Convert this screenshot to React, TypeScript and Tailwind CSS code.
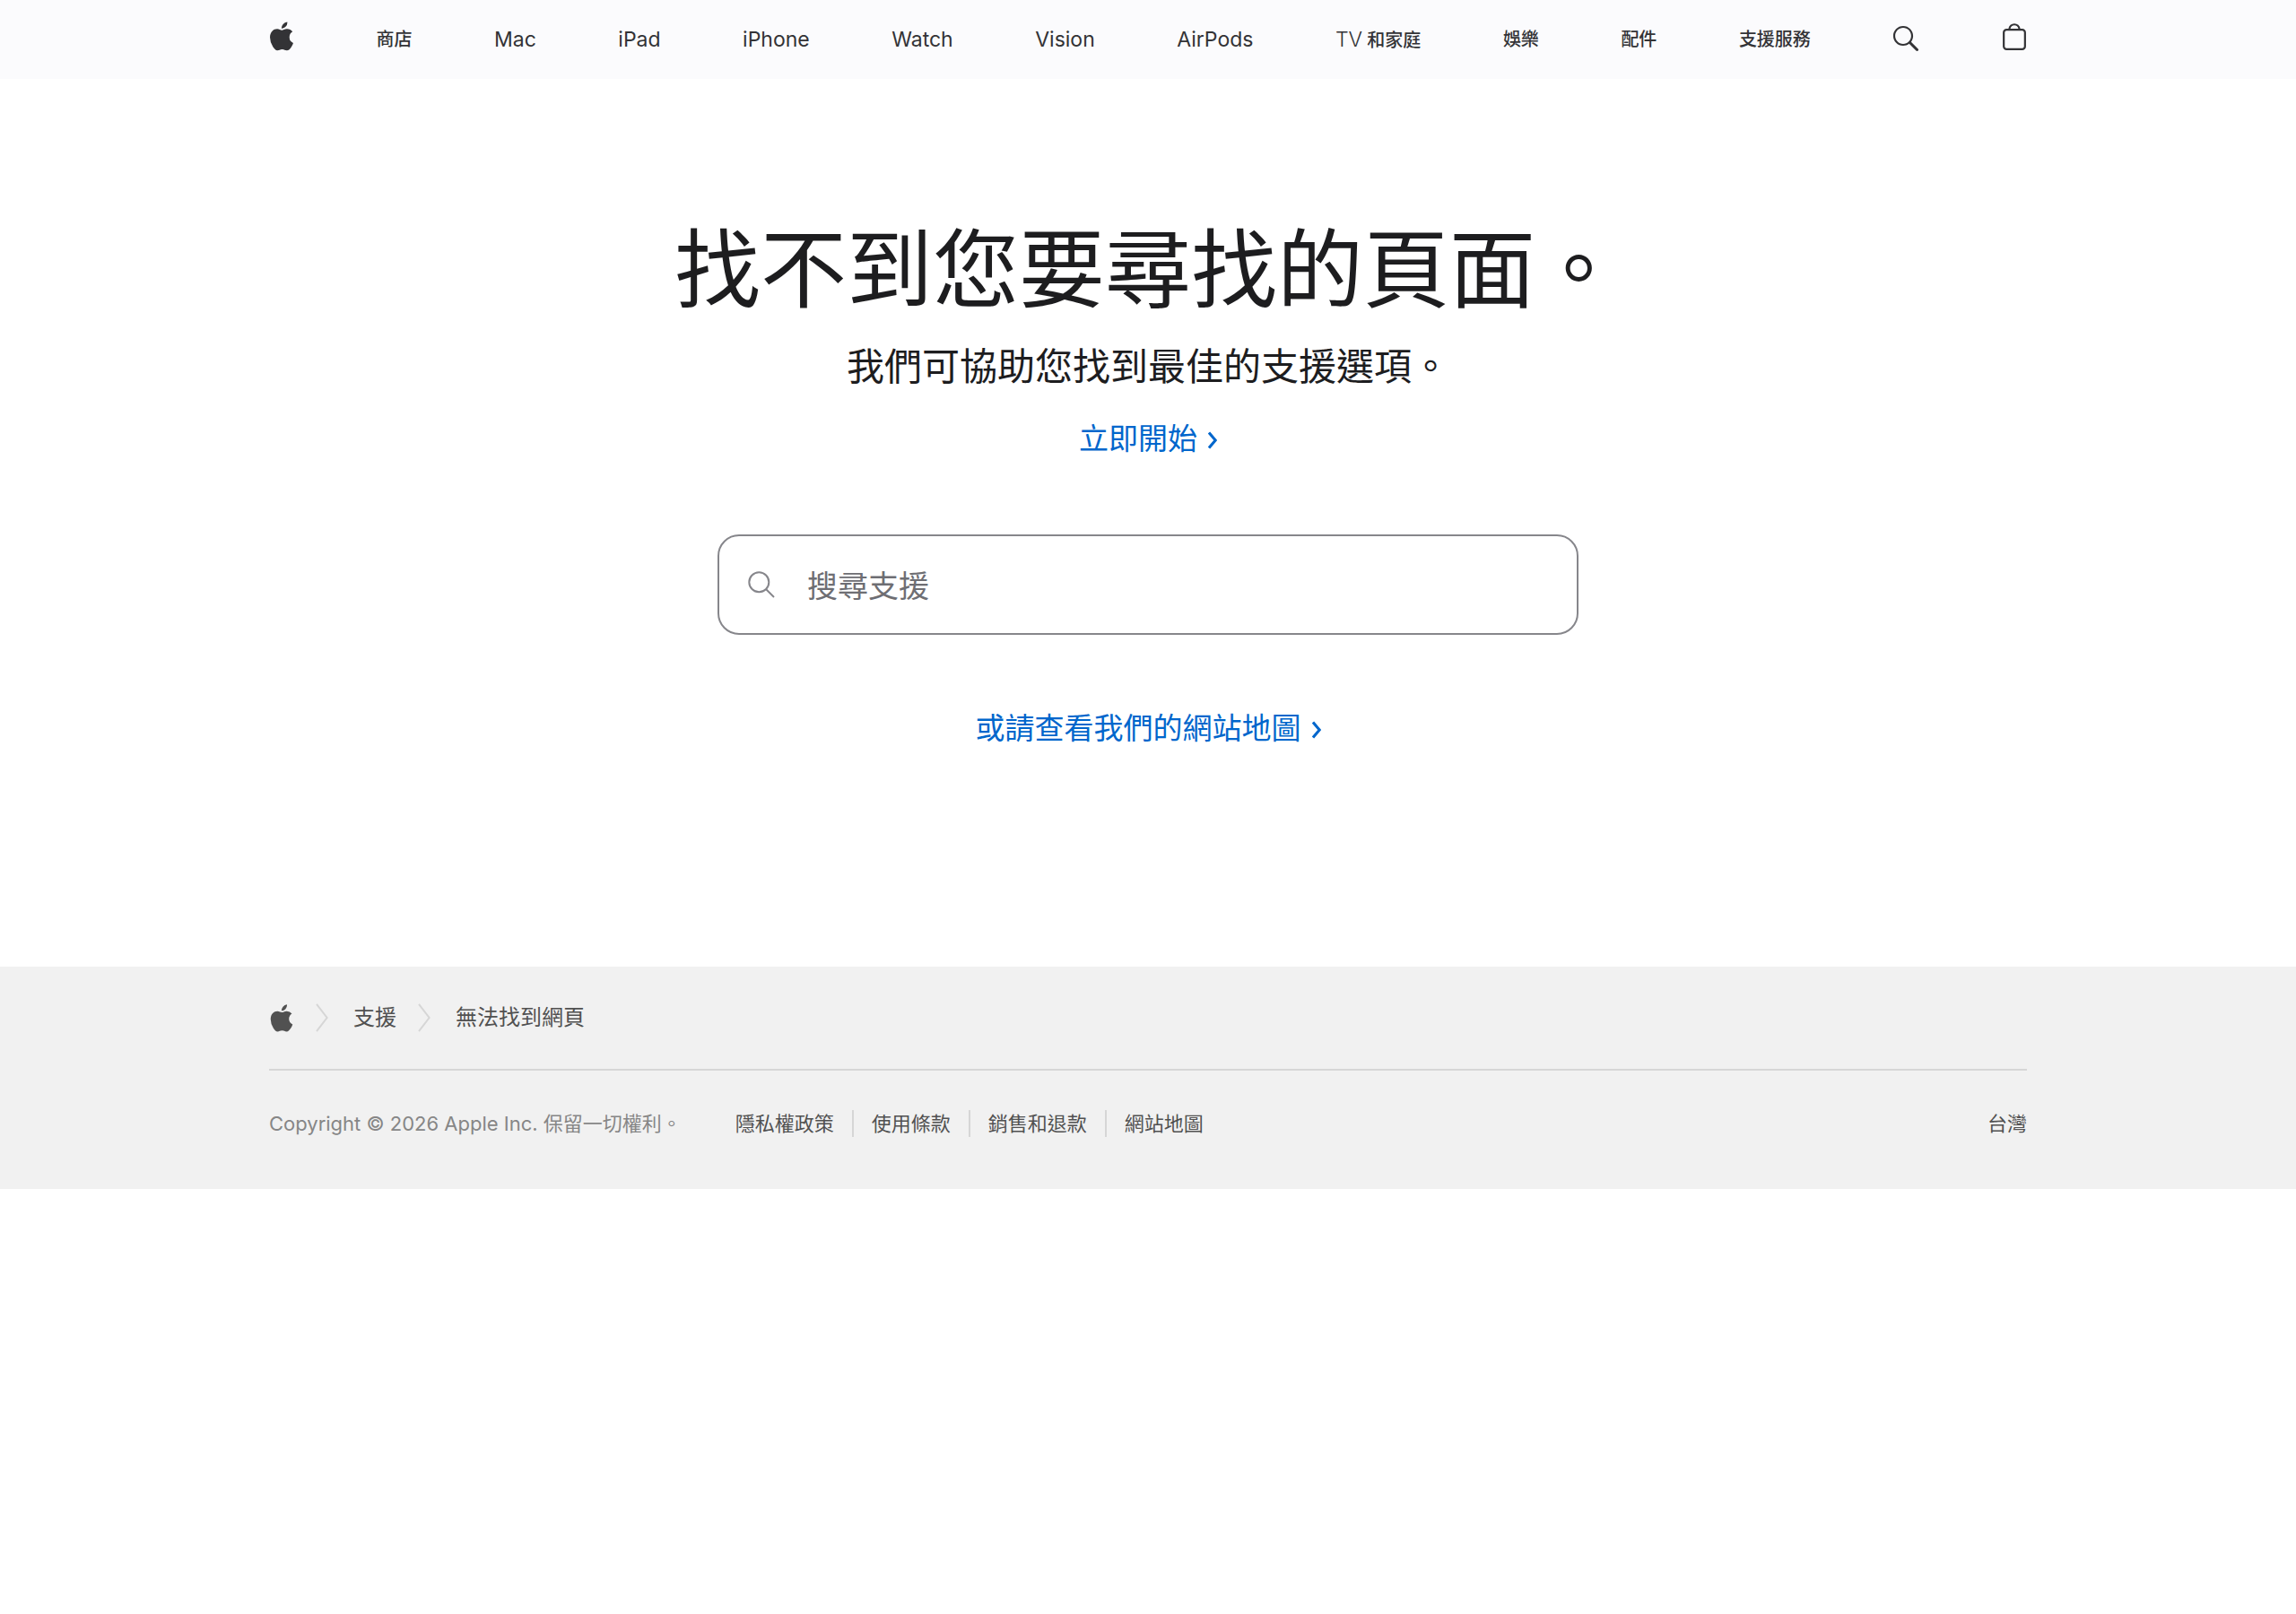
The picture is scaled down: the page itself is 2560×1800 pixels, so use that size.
import React from 'react';

const NAV_ITEMS = [
  '商店',
  'Mac',
  'iPad',
  'iPhone',
  'Watch',
  'Vision',
  'AirPods',
  'TV 和家庭',
  '娛樂',
  '配件',
  '支援服務',
];

const LEGAL_LINKS = ['隱私權政策', '使用條款', '銷售和退款', '網站地圖'];

const AppleLogo: React.FC<{ className?: string }> = ({ className }) => (
  <svg viewBox="0 11 14 18" className={className} fill="currentColor" aria-hidden="true">
    <path d="m13.0729 17.6825a3.61 3.61 0 0 0 -1.7248 3.0365 3.5132 3.5132 0 0 0 2.1379 3.2223 8.394 8.394 0 0 1 -1.0948 2.2618c-.6816.9812-1.3943 1.9623-2.4787 1.9623s-1.3633-.63-2.613-.63c-1.2187 0-1.6525.6507-2.644.6507s-1.6834-.9089-2.4787-2.0243a9.7842 9.7842 0 0 1 -1.6628-5.2776c0-3.0984 2.014-4.7405 3.9969-4.7405 1.0535 0 1.9314.6919 2.5924.6919.63 0 1.6112-.7333 2.8092-.7333a3.7579 3.7579 0 0 1 3.1604 1.5802zm-3.7284-2.8918a3.5615 3.5615 0 0 0 .8469-2.22 1.5353 1.5353 0 0 0 -.031-.32 3.5686 3.5686 0 0 0 -2.3445 1.2084 3.4629 3.4629 0 0 0 -.8779 2.1585 1.419 1.419 0 0 0 .031.2892 1.19 1.19 0 0 0 .2169.0207 3.0935 3.0935 0 0 0 2.1586-1.1368z" />
  </svg>
);

const SearchIcon: React.FC = () => (
  <svg viewBox="0 0 15 44" className="h-[88px] w-[30px]" fill="currentColor" aria-hidden="true">
    <path d="M14.298,27.202l-3.87-3.87c0.701-0.929,1.122-2.081,1.122-3.332c0-3.06-2.489-5.55-5.55-5.55c-3.06,0-5.55,2.49-5.55,5.55c0,3.061,2.49,5.55,5.55,5.55c1.251,0,2.403-0.421,3.332-1.122l3.87,3.87c0.151,0.151,0.35,0.228,0.548,0.228s0.396-0.076,0.548-0.228C14.601,27.995,14.601,27.505,14.298,27.202z M1.55,20c0-2.454,1.997-4.45,4.45-4.45c2.454,0,4.45,1.997,4.45,4.45S8.454,24.45,6,24.45C3.546,24.45,1.55,22.454,1.55,20z" />
  </svg>
);

const BagIcon: React.FC = () => (
  <svg viewBox="0 0 14 44" className="h-[88px] w-7" fill="currentColor" aria-hidden="true">
    <path d="m11.3535 16.0283h-1.0205a3.4229 3.4229 0 0 0 -3.333-2.9648 3.4229 3.4229 0 0 0 -3.333 2.9648h-1.02a2.1184 2.1184 0 0 0 -2.117 2.1162v7.7155a2.1186 2.1186 0 0 0 2.1162 2.1167h8.707a2.1186 2.1186 0 0 0 2.1168-2.1167v-7.7155a2.1184 2.1184 0 0 0 -2.1165-2.1162zm-4.3535-1.8652a2.3169 2.3169 0 0 1 2.2222 1.8652h-4.4444a2.3169 2.3169 0 0 1 2.2222-1.8652zm5.37 11.6969a1.0182 1.0182 0 0 1 -1.0166 1.0171h-8.7069a1.0182 1.0182 0 0 1 -1.0165-1.0171v-7.7155a1.0178 1.0178 0 0 1 1.0166-1.0166h8.707a1.0178 1.0178 0 0 1 1.0164 1.0166z" />
  </svg>
);

const MoreLink: React.FC<{ children: React.ReactNode }> = ({ children }) => (
  <a href="#" className="inline-flex items-center gap-3 text-[33px] leading-[48px] text-[#0066cc]">
    {children}
    <svg viewBox="0 0 10 20" className="mt-1 h-5 w-[10px]" fill="none" stroke="currentColor" strokeWidth="3" aria-hidden="true">
      <path d="M1 1.5l7.2 8.5L1 18.5" />
    </svg>
  </a>
);

const BreadcrumbArrow: React.FC = () => (
  <svg viewBox="0 0 14 32" className="h-8 w-[14px]" fill="none" stroke="#d6d6d6" strokeWidth="2" aria-hidden="true">
    <path d="M1 .8L12.6 16L1 31.2" />
  </svg>
);

const GlobalNav: React.FC = () => (
  <nav aria-label="全域" className="bg-[#fbfbfd] text-[#333336]">
    <ul className="mx-auto flex h-[88px] max-w-[1960px] items-center justify-between">
      <li>
        <a href="#" aria-label="Apple">
          <AppleLogo className="mb-2 h-9 w-7" />
        </a>
      </li>
      {NAV_ITEMS.map((item) => (
        <li key={item}>
          {/[a-z]/.test(item) ? (
            <a href="#" className="text-[23px]">{item}</a>
          ) : (
            <a href="#" className="text-[20px] font-medium">
              {item.startsWith('TV') ? (
                <>
                  <span className="text-[23px] font-light">TV</span>
                  {item.slice(2)}
                </>
              ) : (
                item
              )}
            </a>
          )}
        </li>
      ))}
      <li>
        <button type="button" aria-label="搜尋" className="block">
          <SearchIcon />
        </button>
      </li>
      <li>
        <button type="button" aria-label="購物袋" className="block">
          <BagIcon />
        </button>
      </li>
    </ul>
  </nav>
);

const Footer: React.FC = () => (
  <footer className="bg-[#f1f1f1] text-[#515151]">
    <div className="mx-auto max-w-[1960px] pb-[58px]">
      <nav aria-label="導覽路徑" className="flex h-[116px] items-center border-b-2 border-[#d6d6d6] text-[24px]">
        <a href="#" aria-label="Apple">
          <AppleLogo className="h-[34px] w-7" />
        </a>
        <span className="mr-7 ml-6">
          <BreadcrumbArrow />
        </span>
        <a href="#">支援</a>
        <span className="mr-7 ml-6">
          <BreadcrumbArrow />
        </span>
        <span>無法找到網頁</span>
      </nav>
      <div className="mt-11 flex items-center text-[22px] leading-[30px]">
        <p className="mr-[60px] text-[#868686]">Copyright © 2026 Apple Inc. 保留一切權利。</p>
        <ul className="flex">
          {LEGAL_LINKS.map((link) => (
            <li key={link} className="mr-5 border-r-2 border-[#d6d6d6] pr-5 last:border-r-0">
              <a href="#">{link}</a>
            </li>
          ))}
        </ul>
        <a href="#" className="ml-auto">台灣</a>
      </div>
    </div>
  </footer>
);

const App: React.FC = () => {
  return (
    <div className="min-h-screen bg-white font-['Inter','Noto_Sans_CJK_TC',sans-serif] text-[#1d1d1f]" lang="zh-TW">
      <GlobalNav />

      <main className="flex flex-col items-center pt-40 pb-[242px] text-center">
        <h1 className="text-[96px] leading-[104px]">找不到您要尋找的頁面。</h1>
        <p className="mt-[29px] text-[42px] leading-[56px]">我們可協助您找到最佳的支援選項。</p>
        <div className="mt-7 flex">
          <MoreLink>立即開始</MoreLink>
        </div>

        {/* Support search */}
        <form role="search" className="mt-[83px] w-full max-w-[960px]">
          <label className="flex h-28 items-center rounded-[24px] border-2 border-[#86868b] bg-white pl-8">
            <svg viewBox="0 0 30 30" className="mr-9 h-[30px] w-[30px] shrink-0" fill="none" stroke="#86868b" strokeWidth="2" aria-hidden="true">
              <circle cx="12.3" cy="12.3" r="11" />
              <path d="M20 20l9 9" />
            </svg>
            <input
              type="search"
              aria-label="搜尋支援"
              placeholder="搜尋支援"
              className="h-full w-full bg-transparent pt-[2px] text-[34px] outline-none placeholder:text-[#6e6e73]"
            />
          </label>
        </form>

        <div className="mt-20 flex">
          <MoreLink>或請查看我們的網站地圖</MoreLink>
        </div>
      </main>

      <Footer />
    </div>
  );
};

export default App;
